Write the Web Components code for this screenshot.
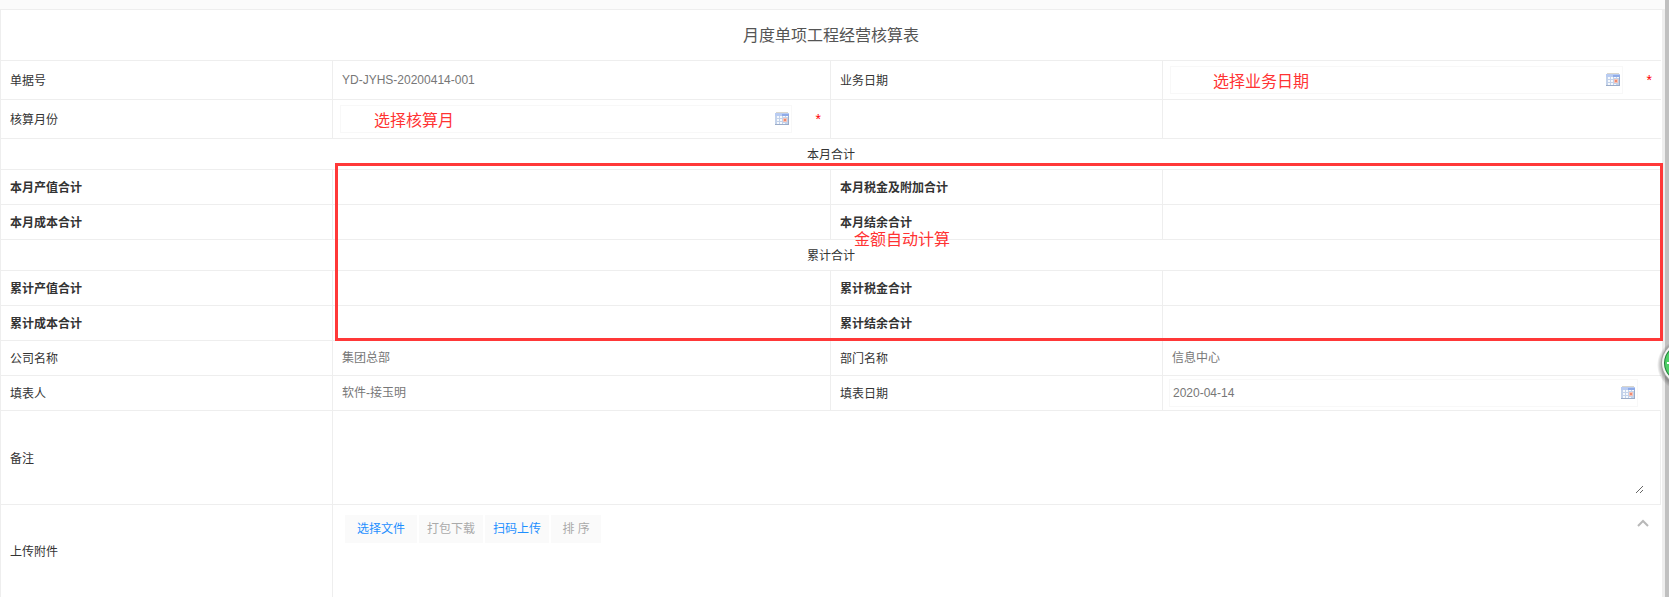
<!DOCTYPE html>
<html lang="zh-CN">
<head>
<meta charset="UTF-8">
<title>月度单项工程经营核算表</title>
<style>
html,
body {
  margin: 0;
  background: #fbfbfb;
}

body {
  font: 12px/16px "Liberation Sans", "Noto Sans CJK SC", sans-serif;
  color: #333;
}
</style>
</head>
<body>

<page-frame>
  <form-sheet heading="月度单项工程经营核算表">

    <form-row size="tall">
      <form-field label="单据号" value="YD-JYHS-20200414-001"></form-field>
      <date-field label="业务日期" required>
        <red-note slot="note" style="--left: 42px">选择业务日期</red-note>
      </date-field>
    </form-row>
    <form-row size="tall">
      <date-field label="核算月份" required>
        <red-note slot="note" style="--left: 33px">选择核算月</red-note>
      </date-field>
      <form-field></form-field>
    </form-row>

    <total-group note="金额自动计算">
      <section-title>本月合计</section-title>
      <form-row>
        <form-field strong label="本月产值合计"></form-field>
        <form-field strong label="本月税金及附加合计"></form-field>
      </form-row>
      <form-row>
        <form-field strong label="本月成本合计"></form-field>
        <form-field strong label="本月结余合计"></form-field>
      </form-row>
      <section-title>累计合计</section-title>
      <form-row>
        <form-field strong label="累计产值合计"></form-field>
        <form-field strong label="累计税金合计"></form-field>
      </form-row>
      <form-row>
        <form-field strong label="累计成本合计"></form-field>
        <form-field strong label="累计结余合计"></form-field>
      </form-row>
    </total-group>

    <form-row>
      <form-field label="公司名称" value="集团总部"></form-field>
      <form-field label="部门名称" value="信息中心"></form-field>
    </form-row>
    <form-row>
      <form-field label="填表人" value="软件-接玉明"></form-field>
      <date-field label="填表日期" value="2020-04-14"></date-field>
    </form-row>

    <remark-field label="备注"></remark-field>
    <upload-field label="上传附件"></upload-field>

  </form-sheet>
</page-frame>

<script>
'use strict';

// shared by every element that has a label cell and a value cell
const cellStyles = `
  :host {
    display: grid;
    grid-template-columns: var(--columns, 2fr 3fr);
    flex: 1;
    min-width: 0;
  }
  .label, .value {
    box-sizing: border-box;
    display: flex;
    align-items: center;
    min-width: 0;
    border-right: 1px solid #eee;
  }
  .label { padding: 2px 9px 0; }
  :host([strong]) .label { font-weight: bold; }
  :host(:last-child) .value { border-right: 0; }
  input, textarea {
    box-sizing: border-box;
    width: 100%;
    min-width: 0;
    margin: 0;
    padding: 0;
    border: 0;
    outline: 0;
    background: transparent;
    font: inherit;
    color: #777;
  }
`;

// attach an open shadow root filled from a template
function attach(element, markup) {
  const template = document.createElement('template');
  template.innerHTML = markup;
  const root = element.attachShadow({ mode: 'open' });
  root.appendChild(template.content.cloneNode(true));
  return root;
}

class PageFrame extends HTMLElement {
  constructor() {
    super();
    attach(this, `
      <style>
        :host {
          box-sizing: border-box;
          display: flex;
          min-height: 100vh;
          padding-top: 9px;
          border-right: 4px solid #c0c0c0;
        }
        ::slotted(*) { flex: 1; min-width: 0; }
        .float {
          position: fixed;
          top: 338px;
          right: 0;
          width: 14px;
          height: 54px;
          overflow: hidden;
        }
        button {
          padding: 0;
          border: 0;
          background: none;
        }
        svg { display: block; }
      </style>
      <slot></slot>
      <div class="float">
        <button type="button" aria-label="悬浮菜单">
          <svg width="56" height="54" viewBox="0 0 56 54">
            <defs>
              <radialGradient id="halo">
                <stop offset="0.75" stop-color="#444" stop-opacity="0.6"/>
                <stop offset="1" stop-color="#444" stop-opacity="0"/>
              </radialGradient>
            </defs>
            <circle cx="28" cy="27" r="26" fill="url(#halo)"/>
            <circle cx="28" cy="25" r="22" fill="#a5a5a5"/>
            <circle cx="28" cy="25" r="21" fill="#f4f6f4"/>
            <circle cx="28" cy="25" r="19" fill="#1d7a35"/>
            <circle cx="28" cy="25" r="18" fill="#4fd068"/>
            <path d="M12 25h18" stroke="#fff" stroke-width="2"/>
          </svg>
        </button>
      </div>
    `);
  }
}

class FormSheet extends HTMLElement {
  constructor() {
    super();
    this.root = attach(this, `
      <style>
        :host {
          display: flex;
          flex-direction: column;
          padding-right: 1px;
          background: #fff;
          border: 0 solid #eee;
          border-width: 1px 3px 0 1px;
        }
        h1 {
          margin: 0;
          padding: 14px 0 12px;
          font-size: 16px;
          line-height: 24px;
          font-weight: normal;
          text-align: center;
          color: #555;
        }
      </style>
      <h1></h1>
      <slot></slot>
    `);
  }

  connectedCallback() {
    this.root.querySelector('h1').textContent = this.getAttribute('heading');
  }
}

class FormRow extends HTMLElement {
  constructor() {
    super();
    attach(this, `
      <style>
        :host {
          display: flex;
          min-height: 34px;
          border-top: 1px solid #eee;
        }
        :host([size="tall"]) { min-height: 38px; }
      </style>
      <slot></slot>
    `);
  }
}

class SectionTitle extends HTMLElement {
  constructor() {
    super();
    attach(this, `
      <style>
        :host {
          display: block;
          padding: 8px 0 6px;
          border-top: 1px solid #eee;
          text-align: center;
        }
      </style>
      <slot></slot>
    `);
  }
}

// rows of totals with the red outline and its remark on top
class TotalGroup extends HTMLElement {
  constructor() {
    super();
    this.root = attach(this, `
      <style>
        :host { display: block; position: relative; }
        .outline {
          position: absolute;
          top: 25px;
          right: -2px;
          bottom: -1px;
          left: calc(20% + 2px);
          border: 3px solid #ff3838;
          pointer-events: none;
        }
        red-note { --left: 516px; --top: 64px; }
      </style>
      <slot></slot>
      <div class="outline">
        <red-note></red-note>
      </div>
    `);
  }

  connectedCallback() {
    this.root.querySelector('red-note').textContent = this.getAttribute('note');
  }
}

class RedNote extends HTMLElement {
  constructor() {
    super();
    attach(this, `
      <style>
        :host {
          position: absolute;
          top: var(--top, 5px);
          left: var(--left, 0);
          font-size: 16px;
          line-height: 20px;
          white-space: nowrap;
          color: #ff3333;
          pointer-events: none;
        }
      </style>
      <slot></slot>
    `);
  }
}

class FormField extends HTMLElement {
  constructor() {
    super();
    this.root = attach(this, `
      <style>
        ${cellStyles}
        .value { padding: 0 9px; }
      </style>
      <label class="label" for="input"></label>
      <div class="value"><input id="input" type="text" readonly></div>
    `);
  }

  connectedCallback() {
    const label = this.getAttribute('label');

    // a field without a label is only a pair of blank cells
    if (!label) {
      this.root.querySelector('input').remove();
      return;
    }
    this.root.querySelector('label').textContent = label;
    this.root.querySelector('input').value = this.getAttribute('value') || '';
  }
}

class DateField extends HTMLElement {
  constructor() {
    super();
    this.root = attach(this, `
      <style>
        ${cellStyles}
        .value { padding: 0 23px 0 6px; }
        :host([required]) .value { padding: 0 9px 0 7px; }
        .box {
          box-sizing: border-box;
          display: flex;
          align-items: center;
          flex: 1;
          min-width: 0;
          height: 28px;
          padding: 0 2px 0 3px;
          border: 1px solid #f8f8f8;
          position: relative;
        }
        button {
          flex: none;
          padding: 0 0 2px;
          border: 0;
          background: none;
          cursor: pointer;
        }
        svg { display: block; }
        .star {
          display: none;
          width: 29px;
          text-align: right;
          font-size: 14px;
          line-height: 16px;
          color: #f00;
        }
        :host([required]) .star { display: block; }
      </style>
      <label class="label" for="date"></label>
      <div class="value">
        <div class="box">
          <input id="date" type="text">
          <button type="button" aria-label="选择日期">
            <svg width="14" height="13" viewBox="0 0 14 13" shape-rendering="crispEdges">
              <path fill="#d9d6cd" d="M1 0h12v1H1z"/>
              <path fill="#b9ccf2" d="M0 1h14v3H0z"/>
              <path fill="#8fabe8" d="M7 2h7v2H7z"/>
              <path fill="#c3d2ea" d="M0 4h14v9H0z"/>
              <path fill="#f6f9fd" d="M2 4h2v2H2zM5 4h2v2H5zM8 4h2v1H8zM11 4h2v1h-2zM2 7h2v2H2zM5 7h2v2H5zM2 10h2v2H2zM5 10h2v2H5zM8 11h2v1H8z"/>
              <path fill="#f6c3b6" d="M8 6h4v4H8z"/>
              <path fill="#ee8a70" d="M9 7h2v2H9z"/>
              <path fill="#9aabc8" d="M0 12h14v1H0zM13 4h1v9h-1z"/>
            </svg>
          </button>
          <slot name="note"></slot>
        </div>
        <span class="star">*</span>
      </div>
    `);
  }

  connectedCallback() {
    this.root.querySelector('label').textContent = this.getAttribute('label');
    const input = this.root.querySelector('input');
    input.value = this.getAttribute('value') || '';
    input.required = this.hasAttribute('required');
  }
}

class RemarkField extends HTMLElement {
  constructor() {
    super();
    this.root = attach(this, `
      <style>
        ${cellStyles}
        :host {
          --columns: 1fr 4fr;
          flex: none;
          border-top: 1px solid #eee;
        }
        .value { padding: 8px 16px 10px 7px; }
        textarea { display: block; height: 75px; resize: both; }
      </style>
      <label class="label" for="remark"></label>
      <div class="value"><textarea id="remark"></textarea></div>
    `);
  }

  connectedCallback() {
    this.root.querySelector('label').textContent = this.getAttribute('label');
  }
}

class UploadField extends HTMLElement {
  constructor() {
    super();
    this.root = attach(this, `
      <style>
        ${cellStyles}
        :host {
          --columns: 1fr 4fr;
          min-height: 92px;
          border-top: 1px solid #eee;
        }
        .value {
          align-items: flex-start;
          gap: 2px;
          padding: 10px 12px;
        }
        .value button {
          height: 28px;
          padding: 0 8px;
          border: 0;
          background: #fafafa;
          font: inherit;
          color: #1e8fff;
        }
        .value .pick { padding: 0 12px; }
        .value .sort { min-width: 50px; }
        .value button:disabled { color: #aaa; }
        .value .fold {
          height: 16px;
          margin-left: auto;
          padding: 0;
          background: none;
        }
        svg { display: block; }
      </style>
      <span class="label"></span>
      <div class="value" role="group">
        <button class="pick" type="button">选择文件</button>
        <button type="button" disabled>打包下载</button>
        <button type="button">扫码上传</button>
        <button class="sort" type="button" disabled>排 序</button>
        <button class="fold" type="button" aria-label="收起">
          <svg width="12" height="8" viewBox="0 0 12 8">
            <path d="M1 7l5-5 5 5" fill="none" stroke="#b8b8b8" stroke-width="2"/>
          </svg>
        </button>
      </div>
    `);
  }

  connectedCallback() {
    const label = this.getAttribute('label');
    this.root.querySelector('.label').textContent = label;
    this.root.querySelector('.value').setAttribute('aria-label', label);
  }
}

customElements.define('page-frame', PageFrame);
customElements.define('form-sheet', FormSheet);
customElements.define('form-row', FormRow);
customElements.define('section-title', SectionTitle);
customElements.define('total-group', TotalGroup);
customElements.define('red-note', RedNote);
customElements.define('form-field', FormField);
customElements.define('date-field', DateField);
customElements.define('remark-field', RemarkField);
customElements.define('upload-field', UploadField);
</script>
</body>
</html>
